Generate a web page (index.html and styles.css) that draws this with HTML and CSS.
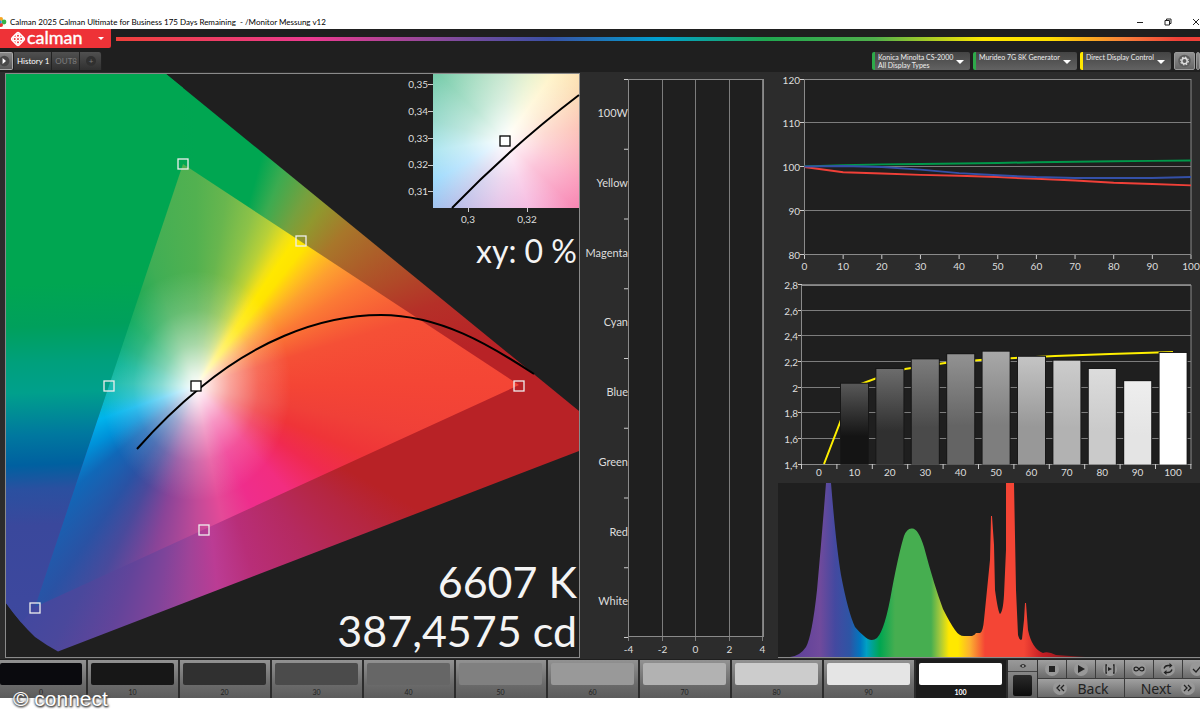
FILE: index.html
```html
<!DOCTYPE html>
<html lang="en">
  <head>
    <meta charset="UTF-8" />
    <meta name="viewport" content="width=device-width, initial-scale=1.0" />
    <title>Calman 2025 - Monitor Messung v12</title>
    <link rel="stylesheet" href="styles.css">
  </head>
  <body>
    <div class="titlebar">
      <svg class="app-icon" viewBox="0 0 8 10" aria-hidden="true">
        <circle cx="1" cy="2" r="2" fill="#f5a623" />
        <circle cx="4" cy="5" r="2.4" fill="#35b44a" />
        <circle cx="1" cy="8" r="2" fill="#e8372f" />
        <circle cx="0" cy="5" r="1.8" fill="#2f8fd6" />
      </svg>
      <span class="window-title">Calman 2025 Calman Ultimate for Business 175 Days Remaining &nbsp;- /Monitor Messung v12</span>
      <div class="window-buttons">
        <button aria-label="Minimize"><svg viewBox="0 0 8 8"><path d="M1 4.5h6" /></svg></button>
        <button aria-label="Restore"><svg viewBox="0 0 8 8"><path d="M1 2.5h4.5v4.5h-4.5zM2.5 2.5v-1.5h4.5v4.5h-1.5" /></svg></button>
        <button aria-label="Close"><svg viewBox="0 0 8 8"><path d="M1 1l6 6M7 1l-6 6" /></svg></button>
      </div>
    </div>

    <div class="app">
      <header>
        <div class="brand-row">
          <button class="brand" aria-haspopup="menu">
            <svg class="logo" viewBox="0 0 16 16" aria-hidden="true">
              <g fill="none" stroke="#fff" stroke-width="1.5" transform="rotate(45 8 8)">
                <rect x="3" y="3" width="10" height="10" rx="2" />
                <circle cx="5.7" cy="5.7" r="1.7" />
                <circle cx="10.3" cy="5.7" r="1.7" />
                <circle cx="5.7" cy="10.3" r="1.7" />
                <circle cx="10.3" cy="10.3" r="1.7" />
              </g>
            </svg>
            <span class="wordmark">calman</span>
            <span class="caret"></span>
          </button>
          <div class="rainbow"></div>
        </div>
        <div class="tab-row">
          <button class="expand" aria-label="Expand"><svg viewBox="0 0 14 16"><circle cx="5" cy="8" r="6" fill="#4a4a4a" /><path d="M3 4.5l4 3.5-4 3.5z" fill="#fff" /></svg></button>
          <nav class="tabs">
            <button class="tab active">History 1</button>
            <button class="tab">OUT8</button>
            <button class="tab add" aria-label="New tab"><span>+</span></button>
          </nav>
          <div class="devices">
            <button class="device meter" aria-haspopup="menu"><span>Konica Minolta CS-2000<br>All Display Types</span><i class="caret"></i></button>
            <button class="device source" aria-haspopup="menu"><span>Murideo 7G 8K Generator</span><i class="caret"></i></button>
            <button class="device display" aria-haspopup="menu"><span>Direct Display Control</span><i class="caret"></i></button>
            <button class="gear" aria-label="Settings"><svg viewBox="0 0 20 18"><circle cx="10" cy="9" r="7" fill="#5c5c5c" /><circle cx="10" cy="9" r="3" fill="none" stroke="#ddd" stroke-width="1.6" /><circle cx="10" cy="9" r="4.3" fill="none" stroke="#ddd" stroke-width="1.4" stroke-dasharray="1.7 1.68" /></svg></button>
            <button class="gear cut" aria-label="More"><svg viewBox="0 0 20 18"><circle cx="10" cy="9" r="7" fill="#5c5c5c" /></svg></button>
          </div>
        </div>
      </header>

      <main>
        <!-- CIE diagram -->
        <svg viewBox="0 72 580 587" role="img" aria-label="CIE chromaticity">
          <defs>
            <clipPath id="locus"><path d="M6 74H166L579 411V451L58 651.5Q46 645 35 637Q22 625 6 603Z" /></clipPath>
            <clipPath id="left-edge"><path d="M6 74H183V164L35 607L6 640Z" /></clipPath>
            <clipPath id="gamut"><path d="M183 164L519 385L35 607Z" /></clipPath>
          </defs>
          <rect class="panel" x="5.5" y="73.5" width="574" height="584" />
          <g clip-path="url(#locus)">
            <foreignObject x="6" y="74" width="573" height="583"><div class="hues outer"></div></foreignObject>
            <g clip-path="url(#left-edge)">
              <foreignObject x="6" y="74" width="573" height="583"><div class="hues edge"></div></foreignObject>
            </g>
            <g clip-path="url(#gamut)">
              <foreignObject x="6" y="74" width="573" height="583"><div class="hues inner"></div></foreignObject>
            </g>
          </g>
          <path class="planck" d="M137 449Q168 414 200 388C250 346 315 315 381 315C440 315 490 345 534 374" />
          <g class="targets">
            <rect x="178" y="159" width="10" height="10" />
            <rect x="296" y="236" width="10" height="10" />
            <rect x="514" y="381" width="10" height="10" />
            <rect x="199" y="525" width="10" height="10" />
            <rect x="30" y="603" width="10" height="10" />
            <rect x="104" y="381" width="10" height="10" />
            <rect class="white" x="191" y="381" width="10" height="10" />
          </g>

          <foreignObject x="433" y="74" width="146" height="134"><div class="hues zoomed"></div></foreignObject>
          <path class="planck" d="M452 208Q512 146 579 95" />
          <g class="targets"><rect class="white" x="500" y="136" width="10" height="10" /></g>
          <path class="tick" d="M428 84.5h5M428 111.5h5M428 138.5h5M428 165.5h5M428 191.5h5M468.5 208v4M527.5 208v4" />
          <g class="label end">
            <text x="428" y="88">0,35</text>
            <text x="428" y="115">0,34</text>
            <text x="428" y="142">0,33</text>
            <text x="428" y="168">0,32</text>
            <text x="428" y="195">0,31</text>
          </g>
          <g class="label mid">
            <text x="468" y="223">0,3</text>
            <text x="527" y="223">0,32</text>
          </g>
          <text class="readout small" x="577" y="263">xy: 0 %</text>
          <text class="readout" x="577" y="598">6607 K</text>
          <text class="readout" x="577" y="647">387,4575 cd</text>
        </svg>

        <svg id="delta" viewBox="580 72 190 587" role="img" aria-label="Colour error"></svg>

        <div class="charts">
          <svg id="rgb" viewBox="770 72 430 207" role="img" aria-label="RGB balance"></svg>
          <svg id="gamma" viewBox="770 279 430 203" role="img" aria-label="Gamma"></svg>
          <svg viewBox="770 482 430 177" role="img" aria-label="Spectrum">
            <defs>
              <linearGradient id="spectrum" gradientUnits="userSpaceOnUse" x1="790" y1="0" x2="1090" y2="0">
                <stop offset="0" stop-color="#5a3f98" />
                <stop offset=".1" stop-color="#704a9c" />
                <stop offset=".15" stop-color="#4449a0" />
                <stop offset=".2" stop-color="#2d55a5" />
                <stop offset=".235" stop-color="#0078c0" />
                <stop offset=".255" stop-color="#00a0c4" />
                <stop offset=".3" stop-color="#00a651" />
                <stop offset=".35" stop-color="#46ae50" />
                <stop offset=".47" stop-color="#46ae50" />
                <stop offset=".5" stop-color="#a4c83c" />
                <stop offset=".53" stop-color="#ffe800" />
                <stop offset=".56" stop-color="#ffe800" />
                <stop offset=".6" stop-color="#fcb030" />
                <stop offset=".65" stop-color="#f44535" />
                <stop offset=".78" stop-color="#f44535" />
                <stop offset=".84" stop-color="#c41e24" />
                <stop offset="1" stop-color="#5c1518" />
              </linearGradient>
            </defs>
            <rect class="plot-bg" x="778" y="483" width="422" height="175" />
            <path fill="url(#spectrum)" d="M790 657Q800 656 806 647Q812 636 817 590Q822 535 826 483H831Q836 545 841 575Q848 612 855 627Q860 633 864 636Q871 643 877 638Q885 630 892 589Q899 552 904 536Q907 528 912 528.500Q918 528 924 547Q934 585 943 609Q950 623 955 630Q959 636 964 636H972Q975 635 976 633L980 633Q983 632 984 620L987 590L990 560L991 516H992L994 545L995 590Q998 612 1000 614Q1003 612 1004 595L1006 550V483H1014L1016 590L1018 635Q1020 642 1022 639L1024 620L1025 603H1026L1028 630Q1032 649 1043 653Q1048 651 1056 655L1085 657Z" />
            <path class="frame" d="M778 657.5H1200" />
          </svg>
        </div>
      </main>

      <footer>
        <div class="patches" id="patches"></div>
        <div class="preview">
          <button aria-label="Show"><svg viewBox="0 0 12 12"><path d="M2 6q4-5 8 0q-4 4-8 0z" fill="#333" /><circle cx="6" cy="6" r="1.3" fill="#aaa" /></svg></button>
          <div class="sample"></div>
        </div>
        <div class="controls">
          <div class="transport">
            <button aria-label="Stop"><svg viewBox="0 0 14 14"><rect x="4" y="4" width="6" height="6" /></svg></button>
            <button aria-label="Play"><svg viewBox="0 0 14 14"><path d="M4 3l7 4-7 4z" /></svg></button>
            <button aria-label="Play range"><svg viewBox="0 0 14 14"><path class="line" d="M4 3h-1v8h1M10 3h1v8h-1" /><path d="M5 5l4 2-4 2z" /></svg></button>
            <button aria-label="Continuous"><svg viewBox="0 0 14 14"><path class="line" d="M7 7C5 4 2 5 2 7s3 3 5 0s5-2 5 0s-3 3-5 0" /></svg></button>
            <button aria-label="Refresh"><svg viewBox="0 0 14 14"><path class="line" d="M3 6.500q1-3 4-3h2M11 7.500q-1 3-4 3h-2" /><path d="M8.500 1l3 2.500-3 2.500zM5.500 8l-3 2.500 3 2.500z" /></svg></button>
            <button aria-label="Accept"><svg viewBox="0 0 14 14"><path class="line" d="M3 7l3 3 5-6" /></svg></button>
          </div>
          <div class="steps">
            <button><svg viewBox="0 0 14 14"><path class="line" d="M7 4l-3 3 3 3M11 4l-3 3 3 3" /></svg>Back</button>
            <button>Next<svg viewBox="0 0 14 14"><path class="line" d="M3 4l3 3-3 3M7 4l3 3-3 3" /></svg></button>
          </div>
        </div>
      </footer>
      <div class="watermark">© connect</div>
    </div>

    <script src="charts.js"></script>
  </body>
</html>
```
FILE: styles.css
```css
* {
    box-sizing: border-box;
}

body {
    margin: 0;
    min-height: 100vh;
    background-color: #fff;
    font-family: Lato, "Liberation Sans", sans-serif;
}

button {
    border: 0;
    padding: 0;
    margin: 0;
    background: none;
    font-family: inherit;
    color: inherit;
}

svg {
    display: block;
}

/* Window title */
.titlebar {
    display: flex;
    align-items: center;
    height: 29px;
    padding-top: 14px;
}

.app-icon {
    width: 8px;
    height: 10px;
}

.window-title {
    padding-left: 2px;
    font-size: 8px;
    color: #000;
    white-space: nowrap;
}

.window-buttons {
    display: flex;
    gap: 20px;
    margin-left: auto;
}

.window-buttons svg {
    width: 8px;
    height: 8px;
    fill: none;
    stroke: #222;
}

.app {
    position: relative;
    background-color: #1f1f1f;
}

/* Header */
.brand-row {
    display: flex;
    align-items: center;
    gap: 5px;
    height: 19px;
}

.brand {
    display: flex;
    align-items: center;
    width: 111px;
    height: 19px;
    padding: 0 7px 0 10px;
    background-color: #ee3237;
    border-radius: 0 0 2px 0;
    color: #fff;
}

.logo {
    width: 16px;
    height: 16px;
}

.wordmark {
    padding: 0 0 3px 1px;
    font-size: 18px;
    line-height: 16px;
    -webkit-text-stroke: 0.4px #fff;
}

.caret {
    border: 3px solid transparent;
    border-top-color: #fff;
    border-bottom: 0;
}

.brand .caret {
    margin-left: auto;
}

.rainbow {
    flex: 1;
    height: 4px;
    background: linear-gradient(to right, #f0403a, #ec3a90 18%, #8a4a9c 30%, #3a50a4 40%, #00a0d0 50%, #20a850 60%, #50b04c 70%, #ffe800 80%, #ffe000 86%, #f8803a 93%, #f04038 98%);
}

.tab-row {
    display: flex;
    align-items: flex-end;
    height: 24px;
    padding-bottom: 2px;
}

.expand {
    width: 13px;
    height: 18px;
    background: linear-gradient(#888, #5a5a5a);
    border: 1px solid #aaa;
    border-left: 0;
    border-radius: 0 2px 2px 0;
}

.expand svg {
    width: 12px;
    height: 16px;
}

.tabs {
    display: flex;
    margin-left: 1px;
}

.tab {
    height: 18px;
    padding: 0 2px 0 3px;
    background: linear-gradient(#505050, #303030);
    border-right: 1px solid #222;
    font-size: 8px;
    color: #7c7c7c;
}

.tab.active {
    color: #fff;
}

.tab.add {
    width: 22px;
    border-radius: 0 3px 0 0;
}

.tab.add span {
    display: block;
    width: 10px;
    margin: auto;
    border-radius: 50%;
    background-color: #303030;
    line-height: 10px;
}

.devices {
    display: flex;
    gap: 3px;
    margin-left: auto;
}

.device {
    display: flex;
    justify-content: space-between;
    height: 18px;
    padding: 1px 6px 0 3px;
    background: linear-gradient(#444, #626262);
    border-left: 3px solid #2eaa4a;
    border-radius: 2px;
    font-size: 7px;
    line-height: 8px;
    text-align: left;
    color: #eee;
    white-space: nowrap;
}

.device .caret {
    align-self: center;
    border-width: 4px 4px 0 4px;
}

.meter { width: 98px; }
.source { width: 104px; }
.display { width: 91px; border-left-color: #ffe800; }

.gear {
    width: 21px;
    height: 18px;
    background: linear-gradient(#909090, #666);
    border: 1px solid #999;
    border-radius: 2px;
}

.gear.cut {
    width: 4px;
    margin-left: -2px;
    overflow: hidden;
}

.gear svg {
    width: 19px;
    height: 16px;
}

/* Charts */
main {
    display: grid;
    grid-template-columns: 580fr 190fr 430fr;
    background-color: #2c2c2c;
}

main svg {
    width: 100%;
    height: auto;
}

.panel {
    fill: #1f1f1f;
    stroke: #8a8a8a;
}

.plot-bg {
    fill: #1f1f1f;
}

.hues {
    width: 100%;
    height: 100%;
}

.outer {
    background: conic-gradient(at 190px 312px, #00a651, #00a651 16deg, #3cab50 22deg, #76a03e 30deg, #90982e 35deg, #a8762a 44deg, #b04a28 62deg, #b53028 71deg, #b82226 83deg, #b82226 119deg, #b52640 129deg, #b52a60 146deg, #b82e78 163deg, #bb3c94 174deg, #a04398 182deg, #80449a 190deg, #63449a 199deg, #4a489c 209deg, #4048a0 219deg, #3a489c 238deg, #00a05f 292deg, #00a651);
}

.edge {
    background: linear-gradient(178deg, #00a651 35%, #00a05c 42%, #00a07c 48%, #00a08c 53%, #00789f 60%, #0060a0 65%, #2a50a0 69%, #3a489c 75%, #4048a0);
}

.inner {
    background:
        radial-gradient(ellipse 95px 115px at 190px 312px, #fff 0, rgba(255, 255, 255, 0.85) 12%, rgba(255, 255, 255, 0.5) 36%, rgba(255, 255, 255, 0.18) 66%, transparent),
        conic-gradient(at 190px 312px, #52b150, #68b64e 9deg, #8cc248 18deg, #b8d038 25deg, #f0e018 31deg, #ffe800 34deg, #ffe400 38deg, #ffc41c 43deg, #fda030 49deg, #fb7a35 58deg, #f55036 73deg, #f44535 90deg, #f04038 102deg, #ef3438 112deg, #f02a50 124deg, #f22d80 139deg, #ef2d8c 155deg, #e44a98 169deg, #c04a98 180deg, #8a4498 194deg, #4a4a9c 206deg, #2a52a4 215deg, #1068b8 230deg, #0090d8 240deg, #00b4ec 251deg, #08b8c4 261deg, #10b8a8 272deg, #00b090 286deg, #00a870 299deg, #08a85a 315deg, #20aa55 326deg, #3fae55 340deg, #52b150);
}

.zoomed {
    background:
        radial-gradient(circle at 72px 66px, #fff 0, rgba(255, 255, 255, 0.5) 40px, transparent 98px),
        conic-gradient(at 72px 66px, #b8e0c0, #e4efc0 22deg, #fff2c0 36deg, #fcdcb0 55deg, #fcb8a8 80deg, #fa90b4 120deg, #f888b4 134deg, #f4a8d8 160deg, #dcb0e0 185deg, #b0b4e4 215deg, #90d4fc 240deg, #98dfec 262deg, #80d0c0 285deg, #74cba8 315deg, #98d6b4 340deg, #b8e0c0);
}

.planck {
    fill: none;
    stroke: #000;
    stroke-width: 2;
}

.targets rect {
    fill: none;
    stroke: #eee;
    stroke-width: 1.3;
}

.targets .white {
    fill: #fff;
    stroke: #000;
}

.tick {
    stroke: #ccc;
}

.grid {
    stroke: #7c7c7c;
}

.frame {
    fill: none;
    stroke: #8a8a8a;
}

.label {
    font-size: 10px;
    fill: #ddd;
}

.names {
    font-size: 11px;
}

.end { text-anchor: end; }
.mid { text-anchor: middle; }

.readout {
    font-size: 43px;
    fill: #f4f4f4;
    text-anchor: end;
}

.readout.small {
    font-size: 32px;
}

.curve {
    fill: none;
    stroke-width: 2;
}

.red { stroke: #f04038; }
.green { stroke: #00984a; }
.blue { stroke: #3450a8; }
.yellow { stroke: #fff000; }

/* Patch strip */
footer {
    display: grid;
    grid-template-columns: 1008fr 30fr 162fr;
    height: 39px;
    padding-top: 1px;
    overflow: hidden;
}

.patches {
    display: grid;
    grid-template-columns: 88fr repeat(10, 92fr);
}

.patch {
    display: flex;
    flex-direction: column;
    padding: 3px 4px 0 3px;
    background: linear-gradient(#929292, #6c6c6c 60%, #5a5a5a);
    border-right: 2px solid #2c2c2c;
    font-size: 7px;
    line-height: 14px;
    color: #222;
}

.patch:first-child {
    padding-left: 0;
}

.patch .swatch {
    width: 100%;
    height: 22px;
    border-radius: 2px;
}

.patch.selected {
    background: #1c1c1c;
    color: #fff;
    font-weight: bold;
}

.preview {
    display: grid;
    grid-template-rows: 12px 1fr;
    background: linear-gradient(#999, #5c5c5c);
    border-right: 1px solid #333;
}

.preview button {
    border-bottom: 1px solid #444;
}

.preview svg {
    width: 12px;
    height: 10px;
    margin: auto;
}

.sample {
    margin: 3px 5px;
    background: linear-gradient(#2a2a2a, #0c0c0c);
    border-radius: 2px;
}

.controls {
    width: calc(100% + 12px);
    display: grid;
    grid-template-rows: 19px 19px;
    color: #222;
}

.transport,
.steps {
    display: grid;
    grid-template-columns: repeat(6, 1fr);
}

.steps {
    grid-template-columns: repeat(2, 1fr);
}

.controls button {
    display: flex;
    align-items: center;
    justify-content: center;
    gap: 10px;
    background: linear-gradient(#a0a0a0, #6a6a6a);
    border-right: 1px solid #3c3c3c;
    border-bottom: 1px solid #3c3c3c;
    font: 14px/17px "Noto Sans", sans-serif;
}

.controls svg {
    width: 14px;
    height: 14px;
    border-radius: 50%;
    background-color: #989898;
    fill: #222;
}

.controls .line {
    fill: none;
    stroke: #222;
    stroke-width: 1.3;
}

.watermark {
    position: absolute;
    left: 13px;
    bottom: -13px;
    font: 21px/24px "Liberation Sans", sans-serif;
    color: #fff;
    text-shadow: 0 1px 2px #444, 1px 1px 2px #444, 0 0 3px #666;
}
```
FILE: charts.js
```js
const bg = (x, y, w, h) => `<rect class="plot-bg" x="${x}" y="${y}" width="${w}" height="${h}" />`;
const frame = (x, y, w, h) => `<rect class="frame" x="${x}" y="${y}" width="${w}" height="${h}" />`;
const line = (cls, x1, y1, x2, y2) => `<line class="${cls}" x1="${x1}" y1="${y1}" x2="${x2}" y2="${y2}" />`;
const label = (cls, x, y, text) => `<text class="label ${cls}" x="${x}" y="${y}">${text}</text>`;
const curve = (cls, points) => `<polyline class="curve ${cls}" points="${points}" />`;

// Colour error per patch, no readings yet
function drawDelta() {
  const names = ['100W', 'Yellow', 'Magenta', 'Cyan', 'Blue', 'Green', 'Red', 'White'];
  const step = 69.75;
  let out = bg(629, 79, 135, 558);
  for (let i = 0; i <= 8; i++) {
    out += line('tick', 624, 79.5 + i * step, 629, 79.5 + i * step);
  }
  names.forEach((name, i) => {
    out += label('names end', 628, Math.round(117 + i * step), name);
  });
  [-4, -2, 0, 2, 4].forEach((value, i) => {
    const x = Math.round(629 + i * 33.6) - 0.5;
    out += line('grid', x, 79, x, 641) + label('mid', x, 653, value);
  });
  out += frame(628.5, 79.5, 135, 557);
  document.getElementById('delta').innerHTML = out;
}

function drawRgb() {
  const px = (v) => 804.5 + v * 3.865;
  const py = (v) => 79.5 + (120 - v) * 4.375;
  const toPoints = (values) => values.map((v, i) => px(i * 10) + ',' + py(v)).join(' ');
  let out = bg(804, 79, 387, 175);
  for (let v = 80; v <= 120; v += 10) {
    const y = Math.round(py(v)) - 0.5;
    out += line('grid', 804, y, 1191, y) + line('tick', 800, y, 804, y);
    out += label('end', 800, y + 4, v);
  }
  for (let v = 0; v <= 100; v += 10) {
    out += line('tick', px(v), 255, px(v), 259) + label('mid', px(v), 270, v);
  }
  out += frame(804.5, 79.5, 386.5, 175);
  out += curve('green', toPoints([100.1, 100.4, 100.6, 100.7, 100.8, 100.9, 101.1, 101.2, 101.3, 101.4, 101.5]));
  out += curve('red', toPoints([100, 98.8, 98.5, 98.2, 98, 97.7, 97.3, 96.9, 96.4, 96.1, 95.8]));
  out += curve('blue', toPoints([100.1, 100.2, 100, 99.4, 98.6, 98.1, 97.7, 97.5, 97.5, 97.5, 97.7]));
  document.getElementById('rgb').innerHTML = out;
}

function drawGamma() {
  const readings = [2.03, 2.145, 2.22, 2.26, 2.28, 2.24, 2.21, 2.145, 2.05, 2.27];
  const shades = [
    ['#585858', '#141414'], ['#6c6c6c', '#303030'], ['#7c7c7c', '#4a4a4a'], ['#929292', '#646464'],
    ['#a8a8a8', '#7e7e7e'], ['#c4c4c4', '#989898'], ['#cccccc', '#b2b2b2'], ['#dcdcdc', '#cacaca'],
    ['#eeeeee', '#e4e4e4'], ['#ffffff', '#ffffff']
  ];
  const step = 35.4;
  const bottom = 464.5;
  const py = (v) => bottom - (v - 1.4) * 128.2;
  let out = '<defs>';
  shades.forEach(([top, low], i) => {
    out += `<linearGradient id="bar${i}" x1="0" y1="0" x2="0" y2="1"><stop offset="0" stop-color="${top}" /><stop offset=".65" stop-color="${low}" /></linearGradient>`;
  });
  out += '</defs>' + bg(802, 285, 389, 179);
  for (let i = 0; i <= 7; i++) {
    const v = 1.4 + i * 0.2;
    const y = Math.round(py(v)) - 0.5;
    out += line('grid', 802, y, 1191, y) + line('tick', 798, y, 802, y);
    out += label('end', 798, y + 4, String(Math.round(v * 10) / 10).replace('.', ','));
  }
  out += frame(801.5, 285.5, 389.5, 179);
  out += curve('yellow', '824,464 846,407 858,385 877,378 905,369 945,363 980,360 1015,358 1055,356 1110,354 1173,352');
  readings.forEach((v, i) => {
    const x = 841 + i * step;
    const y = py(v);
    out += `<rect x="${x - 1}" y="${y - 1}" width="29" height="${bottom - y + 1}" fill="#171717" />`;
    out += `<rect x="${x}" y="${y}" width="27" height="${bottom - y}" fill="url(#bar${i})" />`;
  });
  for (let i = 0; i <= 11; i++) {
    out += line('tick', 801.5 + i * step, 464, 801.5 + i * step, 469);
    if (i < 11) {
      out += label('mid', 819 + i * step, 476, i * 10);
    }
  }
  document.getElementById('gamma').innerHTML = out;
}

function drawPatches() {
  const colors = ['#0a0a0e', '#171717', '#303030', '#4b4b4b', '#666666', '#808080', '#999999', '#b2b2b2', '#cccccc', '#e5e5e5', '#ffffff'];
  document.getElementById('patches').innerHTML = colors.map((color, i) =>
    `<button class="patch${i === 10 ? ' selected' : ''}"><span class="swatch" style="background-color: ${color}"></span><span>${i * 10}</span></button>`
  ).join('');
}

drawDelta();
drawRgb();
drawGamma();
drawPatches();
```
